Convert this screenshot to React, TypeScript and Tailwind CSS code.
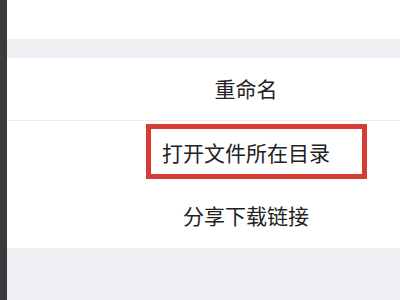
export default function App() {
  const font = { fontFamily: '"Noto Sans CJK SC", "Noto Sans", sans-serif' };

  return (
    <div className="flex h-[300px] w-[400px] overflow-hidden bg-white" style={font}>
      <div className="w-[7px] shrink-0 bg-[#3b3b3d]" />
      <div className="flex-1 overflow-hidden">
        <div className="flex w-[478px] flex-col">
          <div className="h-[39px] bg-white" />
          <div className="h-[19px] bg-[#efeef3]" />
          <div className="flex h-[62px] items-center justify-center bg-white text-[21px] text-[#222]">
            重命名
          </div>
          <div className="h-px bg-[#ececef]" />
          <div className="relative flex h-[63px] items-center justify-center bg-white text-[21px] text-[#222]">
            打开文件所在目录
            <div className="absolute left-[139px] top-[3px] h-[55px] w-[221px] border-[5px] border-[#d63b36]" />
          </div>
          <div className="flex h-[64px] items-center justify-center bg-white text-[21px] text-[#222]">
            分享下载链接
          </div>
          <div className="h-[60px] bg-[#efeef3]" />
        </div>
      </div>
    </div>
  );
}
